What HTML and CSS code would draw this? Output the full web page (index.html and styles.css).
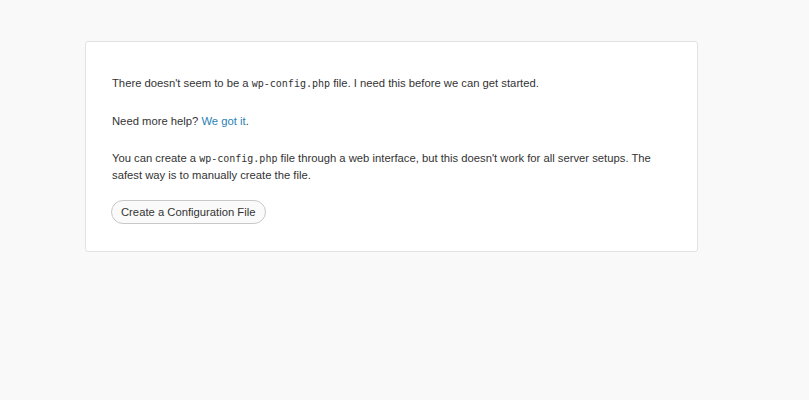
FILE: index.html
```html
<!DOCTYPE html>
<html lang="en">
<head>
	<title>WordPress &rsaquo; Error</title>
	<link rel="stylesheet" href="styles.css">
</head>
<body>

<div id="error-page">
	<p>There doesn't seem to be a <code>wp-config.php</code> file. I need this before we can get started.</p>
	<p>Need more help? <a href="#">We got it</a>.</p>
	<p>You can create a <code>wp-config.php</code> file through a web interface, but this doesn't work for all server setups. The safest way is to manually create the file.</p>
	<p class="step"><a href="#" class="button">Create a Configuration File</a></p>
</div>

</body>
</html>
```

FILE: styles.css
```css
html {
	background: #f9f9f9;
}

body {
	margin: 0;
	padding: 41px 0 0 85px;
	font-family: "Liberation Sans", Arial, sans-serif;
	font-size: 11.25px;
	color: #333;
}

#error-page {
	width: 559px;
	background: #fff;
	border: 1px solid #e2e2e2;
	border-radius: 3px;
	padding: 33px 26px 27px 26px;
}

p {
	margin: 0;
	line-height: 17px;
}

p + p {
	margin-top: 20px;
}

p:first-child {
	margin-bottom: 21px;
}

code {
	font-family: "DejaVu Sans Mono", Consolas, monospace;
	font-size: 10px;
}

a {
	color: #2a7fb5;
	text-decoration: none;
}

.step {
	display: flex;
	margin-top: 16px;
	margin-left: -1px;
}

.button {
	color: #333;
	background: #fafafa;
	border: 1px solid #c8c8c8;
	border-radius: 12px;
	padding: 3px 10px 2px 9px;
	line-height: 17px;
}
```
